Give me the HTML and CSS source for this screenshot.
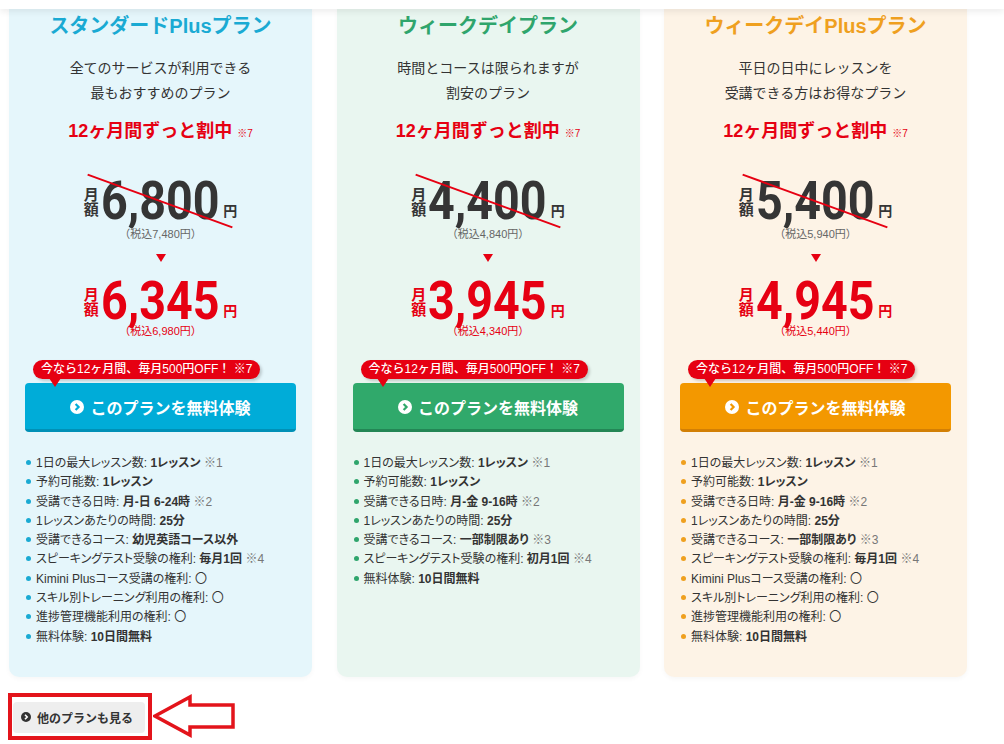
FILE: index.html
```html
<!DOCTYPE html>
<html lang="ja">
<head>
<meta charset="utf-8">
<title>プラン一覧</title>
<link rel="stylesheet" href="styles.css">
</head>
<body>
<div class="topbar"></div>
<div class="plans">
  <div class="card card-blue">
    <h2 class="title">スタンダードPlusプラン</h2>
    <p class="desc">全てのサービスが利用できる<br>最もおすすめのプラン</p>
    <p class="promo">12ヶ月間ずっと割中 <span class="promo-note">※7</span></p>
    <div class="price-row old-row"><div class="price old"><span class="unit-v"><span>月</span><span>額</span></span><span class="num">6,800</span><span class="yen">円</span><span class="strike"></span></div></div>
    <p class="tax">（税込7,480円）</p>
    <div class="down"></div>
    <div class="price-row"><div class="price new"><span class="unit-v"><span>月</span><span>額</span></span><span class="num">6,345</span><span class="yen">円</span></div></div>
    <p class="tax red">（税込6,980円）</p>
    <div class="badge">今なら12ヶ月間、毎月500円OFF！ ※7</div>
    <a class="btn" href="#"><svg class="ico" viewBox="0 0 14 14" width="14" height="14"><circle cx="7" cy="7" r="7" fill="#fff"/><path d="M5.6 3.9 L8.6 7 L5.6 10.1" fill="none" stroke="currentColor" stroke-width="2.2"/></svg><span>このプランを無料体験</span></a>
    <ul class="features">
      <li>1日の最大レッスン数: <b>1レッスン</b> <span class="n">※1</span></li>
      <li>予約可能数: <b>1レッスン</b></li>
      <li>受講できる日時: <b>月-日 6-24時</b> <span class="n">※2</span></li>
      <li>1レッスンあたりの時間: <b>25分</b></li>
      <li>受講できるコース: <b>幼児英語コース以外</b></li>
      <li>スピーキングテスト受験の権利: <b>毎月1回</b> <span class="n">※4</span></li>
      <li>Kimini Plusコース受講の権利: 〇</li>
      <li>スキル別トレーニング利用の権利: 〇</li>
      <li>進捗管理機能利用の権利: 〇</li>
      <li>無料体験: <b>10日間無料</b></li>
    </ul>
  </div>
  <div class="card card-green">
    <h2 class="title">ウィークデイプラン</h2>
    <p class="desc">時間とコースは限られますが<br>割安のプラン</p>
    <p class="promo">12ヶ月間ずっと割中 <span class="promo-note">※7</span></p>
    <div class="price-row old-row"><div class="price old"><span class="unit-v"><span>月</span><span>額</span></span><span class="num">4,400</span><span class="yen">円</span><span class="strike"></span></div></div>
    <p class="tax">（税込4,840円）</p>
    <div class="down"></div>
    <div class="price-row"><div class="price new"><span class="unit-v"><span>月</span><span>額</span></span><span class="num">3,945</span><span class="yen">円</span></div></div>
    <p class="tax red">（税込4,340円）</p>
    <div class="badge">今なら12ヶ月間、毎月500円OFF！ ※7</div>
    <a class="btn" href="#"><svg class="ico" viewBox="0 0 14 14" width="14" height="14"><circle cx="7" cy="7" r="7" fill="#fff"/><path d="M5.6 3.9 L8.6 7 L5.6 10.1" fill="none" stroke="currentColor" stroke-width="2.2"/></svg><span>このプランを無料体験</span></a>
    <ul class="features">
      <li>1日の最大レッスン数: <b>1レッスン</b> <span class="n">※1</span></li>
      <li>予約可能数: <b>1レッスン</b></li>
      <li>受講できる日時: <b>月-金 9-16時</b> <span class="n">※2</span></li>
      <li>1レッスンあたりの時間: <b>25分</b></li>
      <li>受講できるコース: <b>一部制限あり</b> <span class="n">※3</span></li>
      <li>スピーキングテスト受験の権利: <b>初月1回</b> <span class="n">※4</span></li>
      <li>無料体験: <b>10日間無料</b></li>
    </ul>
  </div>
  <div class="card card-orange">
    <h2 class="title">ウィークデイPlusプラン</h2>
    <p class="desc">平日の日中にレッスンを<br>受講できる方はお得なプラン</p>
    <p class="promo">12ヶ月間ずっと割中 <span class="promo-note">※7</span></p>
    <div class="price-row old-row"><div class="price old"><span class="unit-v"><span>月</span><span>額</span></span><span class="num">5,400</span><span class="yen">円</span><span class="strike"></span></div></div>
    <p class="tax">（税込5,940円）</p>
    <div class="down"></div>
    <div class="price-row"><div class="price new"><span class="unit-v"><span>月</span><span>額</span></span><span class="num">4,945</span><span class="yen">円</span></div></div>
    <p class="tax red">（税込5,440円）</p>
    <div class="badge">今なら12ヶ月間、毎月500円OFF！ ※7</div>
    <a class="btn" href="#"><svg class="ico" viewBox="0 0 14 14" width="14" height="14"><circle cx="7" cy="7" r="7" fill="#fff"/><path d="M5.6 3.9 L8.6 7 L5.6 10.1" fill="none" stroke="currentColor" stroke-width="2.2"/></svg><span>このプランを無料体験</span></a>
    <ul class="features">
      <li>1日の最大レッスン数: <b>1レッスン</b> <span class="n">※1</span></li>
      <li>予約可能数: <b>1レッスン</b></li>
      <li>受講できる日時: <b>月-金 9-16時</b> <span class="n">※2</span></li>
      <li>1レッスンあたりの時間: <b>25分</b></li>
      <li>受講できるコース: <b>一部制限あり</b> <span class="n">※3</span></li>
      <li>スピーキングテスト受験の権利: <b>毎月1回</b> <span class="n">※4</span></li>
      <li>Kimini Plusコース受講の権利: 〇</li>
      <li>スキル別トレーニング利用の権利: 〇</li>
      <li>進捗管理機能利用の権利: 〇</li>
      <li>無料体験: <b>10日間無料</b></li>
    </ul>
  </div>
</div>
<div class="more-row">
  <div class="mark">
    <a class="more" href="#"><svg viewBox="0 0 10 10" width="10" height="10"><circle cx="5" cy="5" r="5" fill="#333"/><path d="M4 2.8 L6.2 5 L4 7.2" fill="none" stroke="#fff" stroke-width="1.6"/></svg><span>他のプランも見る</span></a>
  </div>
  <svg class="arrow" viewBox="0 0 84 46" width="84" height="46"><polygon points="2,23 37,4 37,12 80,12 80,34 37,34 37,42" fill="#fff" stroke="#e3141b" stroke-width="3.5" stroke-linejoin="miter"/></svg>
</div>
</body>
</html>
```

FILE: styles.css
```css
* { box-sizing: border-box; }
html, body { margin: 0; padding: 0; background: #fff; }
body {
  font-family: "Liberation Sans", "Noto Sans CJK JP", sans-serif;
  color: #333;
  width: 1004px;
  height: 744px;
  overflow: hidden;
}
.topbar {
  height: 9px;
  background: #fff;
  position: relative;
  z-index: 2;
  box-shadow: 0 3px 6px rgba(0, 0, 0, 0.07);
}
.plans {
  display: flex;
  gap: 24.5px;
  padding-left: 9px;
  align-items: stretch;
}
.card {
  width: 303px;
  border-radius: 0 0 10px 10px;
  padding: 3px 0 30px;
  box-shadow: 0 2px 5px rgba(0, 0, 0, 0.035);
}
.card-blue { background: #e5f6fb; --c: #1aaad3; --btn: #00acd8; --btnd: #0090b6; }
.card-green { background: #e9f6f0; --c: #2fa56c; --btn: #30a96b; --btnd: #238655; }
.card-orange { background: #fdf3e6; --c: #efa01f; --btn: #f39800; --btnd: #d27f05; }

.title {
  margin: 0;
  font-size: 20px;
  line-height: 28px;
  font-weight: 700;
  text-align: center;
  color: var(--c);
}
.desc {
  margin: 16px 0 0;
  font-size: 14px;
  line-height: 25px;
  text-align: center;
  color: #333;
}
.promo {
  margin: 13px 0 0;
  font-size: 18px;
  line-height: 24px;
  font-weight: 700;
  text-align: center;
  color: #e60012;
}
.promo-note { font-size: 10px; font-weight: 400; }
.price-row {
  display: flex;
  justify-content: center;
}
.old-row { margin-top: 34px; }
.price {
  position: relative;
  display: flex;
  align-items: flex-end;
  color: #353535;
}
.price.new { color: #e60012; }
.unit-v {
  display: flex;
  flex-direction: column;
  font-size: 15px;
  line-height: 15px;
  font-weight: 700;
  margin-bottom: 5px;
  margin-right: 2px;
}
.num {
  display: inline-block;
  font-family: Roboto, "DejaVu Sans Condensed", sans-serif;
  font-weight: 700;
  font-size: 53px;
  line-height: 42px;
  transform: scaleX(0.88);
  margin: 0 -8px;
}
.yen {
  font-size: 14px;
  line-height: 14px;
  font-weight: 700;
  margin-left: 4px;
  margin-bottom: 4px;
}
.strike {
  position: absolute;
  left: 50%;
  top: 50%;
  width: 154px;
  height: 2px;
  background: #e60012;
  transform: translate(-50%, -50%) rotate(20deg);
}
.tax {
  margin: 5px 0 0;
  font-size: 11px;
  line-height: 14px;
  text-align: center;
  color: #666;
}
.tax.red { color: #e60012; margin-top: 2px; }
.down {
  width: 0;
  height: 0;
  margin: 13px auto 18px;
  border-left: 5px solid transparent;
  border-right: 5px solid transparent;
  border-top: 8px solid #e60012;
}
.badge {
  position: relative;
  width: fit-content;
  margin: 22px 0 0 24px;
  height: 19px;
  line-height: 19px;
  padding: 0 8px;
  border-radius: 10px;
  background: #e60012;
  color: #fff;
  font-size: 12px;
  font-weight: 500;
  box-shadow: 2px 2px 3px rgba(0, 0, 0, 0.18);
  z-index: 1;
}
.badge::after {
  content: "";
  position: absolute;
  left: 16px;
  top: 18px;
  border-left: 6px solid transparent;
  border-right: 6px solid transparent;
  border-top: 9px solid #e60012;
}
.btn {
  display: flex;
  align-items: center;
  justify-content: center;
  gap: 6px;
  margin: 4px 16px 0;
  height: 49px;
  padding-top: 1px;
  border-radius: 4px;
  background: var(--btn);
  border-bottom: 3px solid var(--btnd);
  color: #fff;
  font-size: 16px;
  font-weight: 700;
  text-decoration: none;
}
.btn .ico { color: var(--btn); flex: none; }
.features {
  list-style: none;
  margin: 22px 0 0;
  padding: 0 0 0 17px;
  font-size: 12px;
  line-height: 19.3px;
  color: #333;
  font-feature-settings: "palt";
}
.features li {
  display: block;
  white-space: nowrap;
}
.features li::before {
  content: "";
  display: inline-block;
  width: 5px;
  height: 5px;
  border-radius: 50%;
  background: var(--c);
  margin-right: 5px;
  vertical-align: 2px;
}
.features b { font-weight: 700; }
.features .n { color: #777; }

.more-row {
  display: flex;
  align-items: center;
  margin: 16px 0 0 8px;
}
.mark {
  border: 4px solid #e3141b;
  padding: 5px 3px 3px 1px;
}
.more {
  display: flex;
  align-items: center;
  gap: 6px;
  width: 132px;
  height: 31px;
  padding-left: 8px;
  border-radius: 4px;
  background: #eeeeee;
  color: #333;
  font-size: 12px;
  font-weight: 700;
  text-decoration: none;
}
.arrow { margin-left: 1px; display: block; }
```
